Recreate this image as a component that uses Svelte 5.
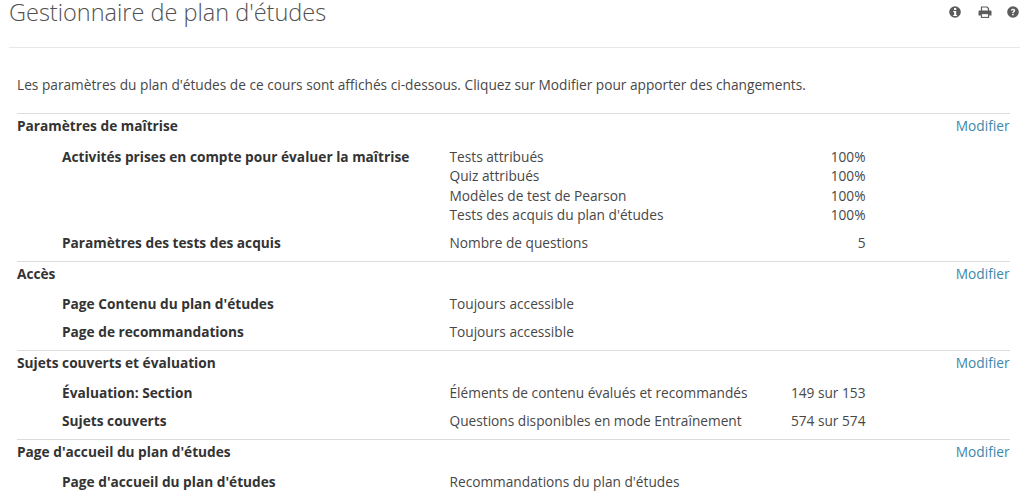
<script>
  const sections = [
    { title: 'Paramètres de maîtrise', rows: [
      { label: 'Activités prises en compte pour évaluer la maîtrise', items: [['Tests attribués','100%'],['Quiz attribués','100%'],['Modèles de test de Pearson','100%'],["Tests des acquis du plan d'études",'100%']] },
      { label: 'Paramètres des tests des acquis', items: [['Nombre de questions','5']] }
    ]},
    { title: 'Accès', rows: [
      { label: "Page Contenu du plan d'études", items: [['Toujours accessible','']] },
      { label: 'Page de recommandations', items: [['Toujours accessible','']] }
    ]},
    { title: 'Sujets couverts et évaluation', rows: [
      { label: 'Évaluation: Section', items: [['Éléments de contenu évalués et recommandés','149 sur 153']] },
      { label: 'Sujets couverts', items: [['Questions disponibles en mode Entraînement','574 sur 574']] }
    ]},
    { title: "Page d'accueil du plan d'études", rows: [
      { label: "Page d'accueil du plan d'études", items: [["Recommandations du plan d'études",'']] }
    ]}
  ];
</script>

<div class="page">
  <header class="top">
    <h1>Gestionnaire de plan d'études</h1>
    <div class="tools">
      <svg width="12" height="12" viewBox="0 0 12 12" aria-label="Informations"><circle cx="6" cy="6" r="5.8" fill="#5c5c5c"/><rect x="5" y="2" width="2.2" height="2" fill="#fff"/><path d="M4.2 5h3v4h.9v1.1H4.2V9h.9V6.1h-.9z" fill="#fff"/></svg>
      <svg class="printer" width="14" height="12" viewBox="0 0 14 12" aria-label="Imprimer"><path d="M3.5 5V1h5.5l1.5 1.5V5" fill="none" stroke="#5c5c5c" stroke-width="1.2"/><path d="M1.5 4.5h11q1 0 1 1V9.5h-2.4V8H2.9v1.5H.5V5.5q0-1 1-1z" fill="#5c5c5c"/><rect x="3.4" y="7.6" width="7.2" height="3.8" fill="#fff" stroke="#5c5c5c" stroke-width="1.1"/></svg>
      <svg width="12" height="12" viewBox="0 0 12 12" aria-label="Aide"><circle cx="6" cy="6" r="5.8" fill="#5c5c5c"/><path d="M3.9 4.6C4 3.4 4.9 2.8 6 2.8c1.2 0 2.2.7 2.2 1.8 0 1.5-1.6 1.5-1.6 2.5H5.2c0-1.7 1.5-1.7 1.5-2.4 0-.4-.3-.7-.8-.7s-.8.3-.9.8z" fill="#fff"/><rect x="5.2" y="7.8" width="1.5" height="1.5" fill="#fff"/></svg>
    </div>
  </header>

  <main class="content">
    <p class="intro">Les paramètres du plan d'études de ce cours sont affichés ci-dessous. Cliquez sur Modifier pour apporter des changements.</p>
    {#each sections as s}
      <section class="section">
        <div class="head">
          <h2>{s.title}</h2>
          <a href="#top">Modifier</a>
        </div>
        {#each s.rows as r}
          <div class="row">
            <div class="label">{r.label}</div>
            <div class="items">
              {#each r.items as it}
                <div class="item"><span>{it[0]}</span><span class="val">{it[1]}</span></div>
              {/each}
            </div>
          </div>
        {/each}
      </section>
    {/each}
  </main>
</div>

<style>
  :global(body) { margin: 0; background: #fff; }
  .page { width: 1024px; height: 503px; overflow: hidden; font-family: "Open Sans", sans-serif; font-size: 13.7px; line-height: 19.5px; color: #474747; box-sizing: border-box; }
  .top { display: flex; justify-content: space-between; margin: 0 4px 0 9px; height: 47px; border-bottom: 1px solid #e8e8e8; }
  h1 { margin: 0; font-size: 23.5px; font-weight: 300; line-height: 24px; color: #505050; }
  .tools { display: flex; align-items: flex-start; gap: 15px; padding: 6px 0 0 0; margin-right: 1px; }
  .printer { margin-left: 2px; }
  .content { padding: 0 14.5px 0 17px; }
  .intro { margin: 0; padding-top: 27px; height: 38px; line-height: 20px; }
  .section { border-top: 1px solid #dcdcdc; padding-bottom: 8px; }
  .head { display: flex; justify-content: space-between; height: 24px; padding-top: 2px; box-sizing: border-box; }
  h2 { margin: 0; font-size: 13.7px; font-weight: 700; line-height: 19.5px; color: #333; }
  .head a { color: #3e87a8; text-decoration: none; }
  .row { display: flex; padding: 8.5px 0 0 45px; }
  .row + .row { padding-top: 8.5px; }
  .label { width: 387.5px; font-weight: 700; color: #333; }
  .items { width: 416px; }
  .item { display: flex; justify-content: space-between; }
  .val { text-align: right; }
</style>
